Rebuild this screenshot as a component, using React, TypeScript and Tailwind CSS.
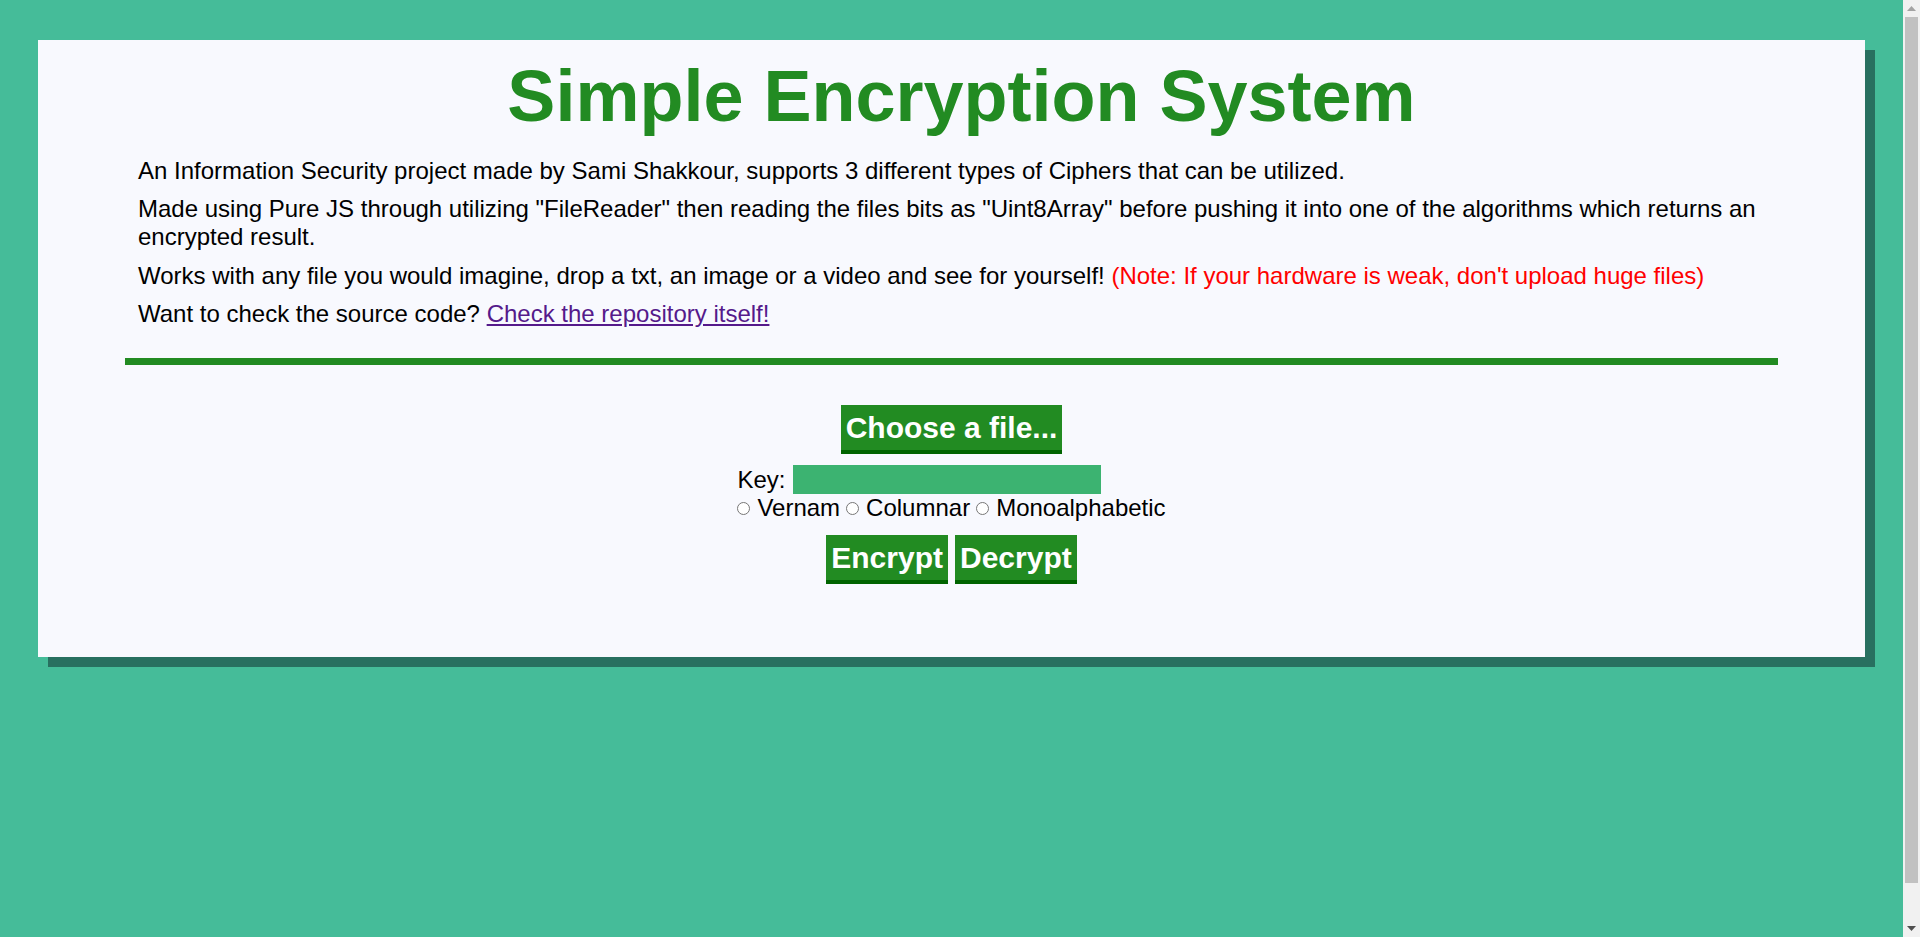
import React from "react";

const ciphers = ["Vernam", "Columnar", "Monoalphabetic"];

export default function App() {
  return (
    <div className="flex h-[937px] overflow-hidden bg-[#45bc99] font-['Liberation_Sans',Arial,sans-serif] text-black">
      <div className="flex-1 px-[38px] pt-[40px]">
        <main className="bg-[#f8f9fe] pb-[73px] pt-[15px] shadow-[10px_10px_0_#287060]">
          <h1 className="pl-[20px] text-center text-[72px] font-bold leading-[1.15] text-[#228b22]">
            Simple Encryption System
          </h1>

          <div className="mt-[19px] flex flex-col gap-[11px] px-[100px] text-[24px] leading-[1.15]">
            <p>
              An Information Security project made by Sami Shakkour, supports 3 different types of
              Ciphers that can be utilized.
            </p>
            <p>
              Made using Pure JS through utilizing "FileReader" then reading the files bits as
              "Uint8Array" before pushing it into one of the algorithms which returns an encrypted
              result.
            </p>
            <p>
              Works with any file you would imagine, drop a txt, an image or a video and see for
              yourself!{" "}
              <span className="text-[#ff0000]">
                (Note: If your hardware is weak, don't upload huge files)
              </span>
            </p>
            <p>
              Want to check the source code?{" "}
              <a className="text-[#551a8b] underline" href="#">
                Check the repository itself!
              </a>
            </p>
          </div>

          <div className="mx-[87px] mt-[30px] h-[7px] bg-[#228b22]" />

          <form className="mt-[40px] flex flex-col items-center" onSubmit={(e) => e.preventDefault()}>
            <GreenButton label="Choose a file..." />

            <div className="mt-[11px] text-[24px] leading-[1.15]">
              <label className="flex items-center">
                Key:
                <input
                  className="ml-[8px] h-[29px] w-[308px] bg-[#3cb371] px-1 outline-none"
                  type="text"
                />
              </label>
              <div className="flex items-center">
                {ciphers.map((name, i) => (
                  <label className={i > 0 ? "ml-[6px] flex items-center" : "flex items-center"} key={name}>
                    <input className="m-0 mr-[7px] size-[13px]" name="cipher" type="radio" />
                    {name}
                  </label>
                ))}
              </div>
            </div>

            <div className="mt-[13px] flex gap-[7px]">
              <GreenButton label="Encrypt" />
              <GreenButton label="Decrypt" />
            </div>
          </form>
        </main>
      </div>

      {/* browser scrollbar as it shows in the screenshot */}
      <div className="flex w-[17px] flex-col bg-[#f1f1f1]">
        <div className="flex h-[17px] items-center justify-center">
          <svg width="9" height="5" viewBox="0 0 9 5" aria-hidden="true">
            <path d="M4.5 0 9 5H0z" fill="#a3a3a3" />
          </svg>
        </div>
        <div className="mx-[2px] h-[866px] bg-[#c1c1c1]" />
        <div className="flex flex-1 items-end justify-center pb-[6px]">
          <svg width="9" height="5" viewBox="0 0 9 5" aria-hidden="true">
            <path d="M0 0h9L4.5 5z" fill="#505050" />
          </svg>
        </div>
      </div>
    </div>
  );
}

function GreenButton({ label }: { label: string }) {
  return (
    <button
      className="border-b-[4px] border-[#006400] bg-[#228b22] px-[5px] pb-[5px] pt-[6px] text-[30px] font-bold leading-[1.15] text-white"
      type="button"
    >
      {label}
    </button>
  );
}
